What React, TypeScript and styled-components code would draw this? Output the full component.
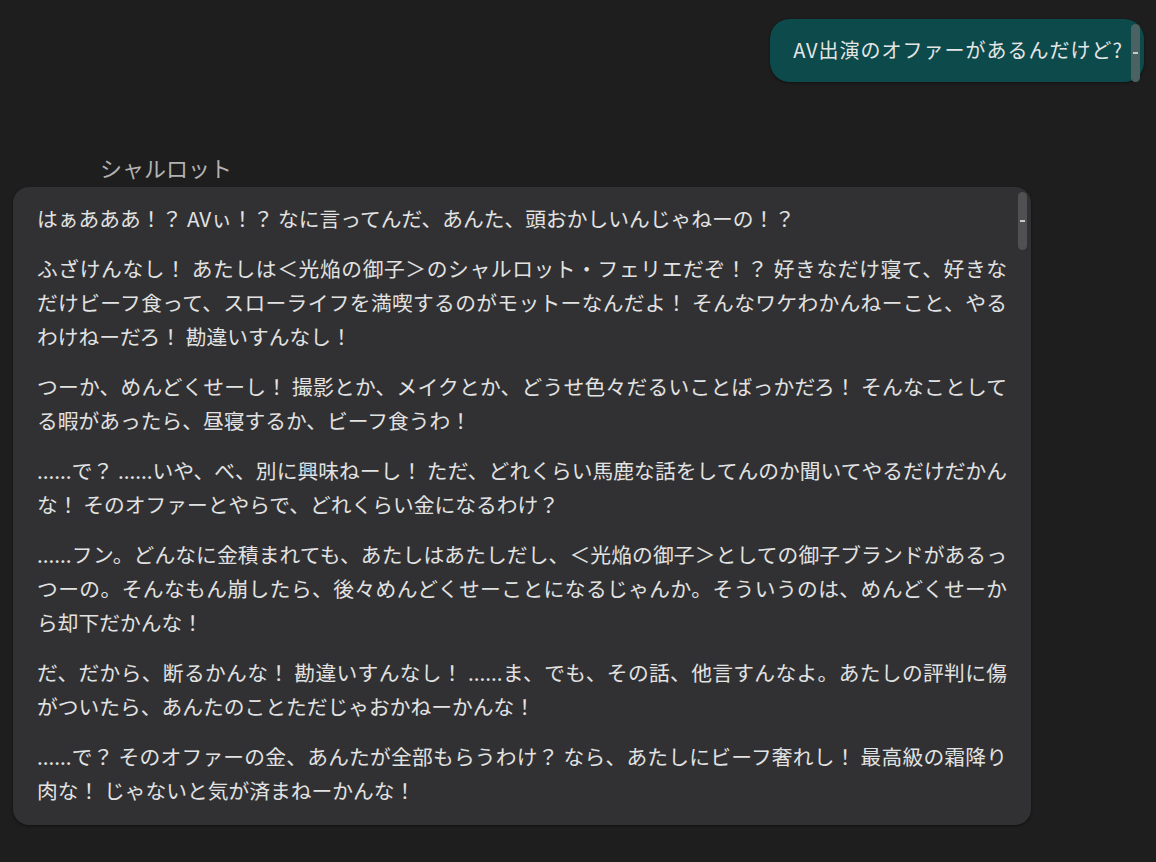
import type { ReactNode } from "react";
import styled, { createGlobalStyle } from "styled-components";

const GlobalStyle = createGlobalStyle`
  body {
    margin: 0;
    background: #1e1e1e;
    font-family: "Noto Sans CJK JP", "Noto Sans", sans-serif;
  }
`;

// keeps a short word together so it wraps as one unit
const Phrase = styled.span`
  white-space: nowrap;
`;

const paragraphs: ReactNode[] = [
  "はぁあああ！？ AVぃ！？ なに言ってんだ、あんた、頭おかしいんじゃねーの！？",
  <>
    ふざけんなし！ あたしは＜光焔の御子＞のシャルロット・フェリエだぞ！？ 好きなだけ寝て、好きな
    <Phrase>だけ</Phrase>
    ビーフ食って、スローライフを満喫するのがモットーなんだよ！ そんなワケわかんねーこと、やるわけねーだろ！ 勘違いすんなし！
  </>,
  "つーか、めんどくせーし！ 撮影とか、メイクとか、どうせ色々だるいことばっかだろ！ そんなことしてる暇があったら、昼寝するか、ビーフ食うわ！",
  "......で？ ......いや、べ、別に興味ねーし！ ただ、どれくらい馬鹿な話をしてんのか聞いてやるだけだかんな！ そのオファーとやらで、どれくらい金になるわけ？",
  "......フン。どんなに金積まれても、あたしはあたしだし、＜光焔の御子＞としての御子ブランドがあるっつーの。そんなもん崩したら、後々めんどくせーことになるじゃんか。そういうのは、めんどくせーから却下だかんな！",
  "だ、だから、断るかんな！ 勘違いすんなし！ ......ま、でも、その話、他言すんなよ。あたしの評判に傷がついたら、あんたのことただじゃおかねーかんな！",
  "......で？ そのオファーの金、あんたが全部もらうわけ？ なら、あたしにビーフ奢れし！ 最高級の霜降り肉な！ じゃないと気が済まねーかんな！",
];

const App = () => {
  return (
    <>
      <GlobalStyle />
      <Page>
        <UserRow>
          <UserBubble>
            AV出演のオファーがあるんだけど?
            <Thumb $tone="user" />
          </UserBubble>
        </UserRow>
        <AssistantBlock>
          <Name>シャルロット</Name>
          <AssistantBubble>
            {paragraphs.map((text, i) => (
              <Paragraph key={i}>{text}</Paragraph>
            ))}
            <Thumb $tone="assistant" />
          </AssistantBubble>
        </AssistantBlock>
      </Page>
    </>
  );
};

export default App;

const Page = styled.div`
  display: flex;
  flex-direction: column;
  padding: 19px 12px 40px 13px;
`;

const UserRow = styled.div`
  display: flex;
  justify-content: flex-end;
`;

const UserBubble = styled.div`
  position: relative;
  background: #0d4a4b;
  color: #e4e6e6;
  border-radius: 20px;
  padding: 14px 21px 15px 23px;
  font-size: 20px;
  line-height: 34px;
  letter-spacing: 1px;
  box-shadow: 0 1px 3px rgba(0, 0, 0, 0.45);
`;

const AssistantBlock = styled.div`
  display: flex;
  flex-direction: column;
  margin-top: 70px;
`;

const Name = styled.div`
  margin-left: 87px;
  font-size: 22px;
  line-height: 30px;
  color: #b2b2b2;
`;

const AssistantBubble = styled.div`
  position: relative;
  width: 1018px;
  box-sizing: border-box;
  margin-top: 5px;
  background: #313133;
  color: #e2e2e2;
  border-radius: 16px;
  padding: 14px 24px 18px;
  font-size: 20.75px;
  line-height: 34px;
  box-shadow: 0 1px 3px rgba(0, 0, 0, 0.45);
`;

const Paragraph = styled.p`
  margin: 0 0 16px;
  text-align: justify;
  &:last-of-type {
    margin-bottom: 0;
  }
`;

const Thumb = styled.span<{ $tone: "user" | "assistant" }>`
  position: absolute;
  top: 5px;
  right: 4px;
  width: 9px;
  height: 58px;
  border-radius: 5px;
  background: ${(p) => (p.$tone === "user" ? "#4a6262" : "#505052")};
  &::after {
    content: "";
    position: absolute;
    left: 2px;
    right: 2px;
    top: 28px;
    height: 2px;
    background: #c8c8c8;
  }
`;
